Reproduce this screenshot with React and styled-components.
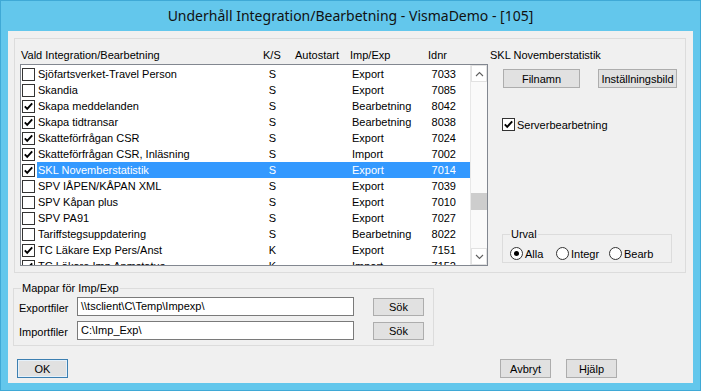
import styled, { createGlobalStyle } from 'styled-components'

const GlobalStyle = createGlobalStyle`
  * { box-sizing: border-box; }
  body {
    margin: 0;
    font-family: 'Liberation Sans', Arial, sans-serif;
    font-size: 11px;
    color: #000;
  }
`

const color = {
  frame: '#63c7ec',
  frameEdge: '#3fa9d6',
  face: '#f0f0f0',
  groupLine: '#dcdcdc',
  button: '#e1e1e1',
  buttonLine: '#adadad',
  select: '#3399ff',
}

const Window = styled.div`
  width: 701px;
  height: 391px;
  background: ${color.frame};
  border: 1px solid ${color.frameEdge};
  display: flex;
  flex-direction: column;
  padding: 0 7px 7px 7px;
`

const TitleBar = styled.div`
  height: 30px;
  display: flex;
  align-items: center;
  justify-content: center;
  font-family: 'Noto Sans', 'Liberation Sans', sans-serif;
  font-size: 14px;
  color: #111;
  padding-bottom: 1px;
`

const Client = styled.div`
  flex: 1;
  background: ${color.face};
  display: flex;
  flex-direction: column;
`

const MainGroup = styled.div`
  margin: 7px 7px 0 6px;
  height: 235px;
  border: 1px solid ${color.groupLine};
  display: flex;
  padding: 7px 0 0 5px;
`

const ListSide = styled.div`
  width: 468px;
  display: flex;
  flex-direction: column;
`

const HeaderRow = styled.div`
  height: 18px;
  line-height: 18px;
  display: grid;
  grid-template-columns: 242px 32px 55px 78px 1fr;
  padding-left: 1px;
`

const ListBox = styled.div`
  width: 468px;
  height: 202px;
  border: 1px solid #828790;
  background: #fff;
  display: flex;
  overflow: hidden;
`

const Rows = styled.div`
  width: 449px;
  padding-top: 1px;
`

const Row = styled.div`
  height: 16px;
  display: flex;
  align-items: center;
`

const CheckCell = styled.div`
  width: 16px;
  display: flex;
  justify-content: flex-start;
  padding-left: 1px;
`

const RowBody = styled.div`
  flex: 1;
  height: 16px;
  line-height: 16px;
  display: grid;
  grid-template-columns: 225px 21px 66px 78px 29px 1fr;
  background: ${({ selected }) => (selected ? color.select : 'transparent')};
  color: ${({ selected }) => (selected ? '#fff' : '#000')};
  white-space: nowrap;
`

const Cell = styled.span`
  padding-left: ${({ pad }) => pad || 0}px;
  text-align: ${({ align }) => align || 'left'};
  overflow: hidden;
`

const ScrollBar = styled.div`
  width: 17px;
  border-left: 1px solid #e8e8e8;
  background: #fafafa;
  display: flex;
  flex-direction: column;
`

const ArrowBox = styled.div`
  height: 17px;
  border: 1px solid #e2e2e2;
  background: #fff;
  display: flex;
  align-items: center;
  justify-content: center;
`

const Track = styled.div`
  flex: 1;
`

const Thumb = styled.div`
  height: 17px;
  background: #cdcdcd;
`

const DetailSide = styled.div`
  flex: 1;
  display: flex;
  flex-direction: column;
  padding-left: 2px;
`

const DetailTitle = styled.div`
  height: 18px;
  line-height: 18px;
`

const ButtonRow = styled.div`
  display: flex;
  gap: 18px;
  margin: 5px 0 0 13px;
`

const Button = styled.button`
  width: ${({ w }) => w || 51}px;
  height: ${({ h }) => h || 19}px;
  padding: 0;
  background: ${color.button};
  border: 1px solid ${({ focused }) => (focused ? '#3c7fb1' : color.buttonLine)};
  box-shadow: ${({ focused }) => (focused ? 'inset 0 0 0 1px #e5f1fb' : 'none')};
  font-family: inherit;
  font-size: 11px;
  color: #000;
`

const CheckLine = styled.label`
  display: flex;
  align-items: center;
  gap: 2px;
  margin: 30px 0 0 12px;
  height: 13px;
`

const GroupBox = styled.div`
  position: relative;
  border: 1px solid ${color.groupLine};
`

const Legend = styled.span`
  position: absolute;
  top: -7px;
  left: ${({ left }) => left || 7}px;
  padding: 0 1px;
  background: ${color.face};
  line-height: 13px;
`

const UrvalBox = styled(GroupBox)`
  margin: auto 0 9px 12px;
  width: 170px;
  height: 29px;
  display: flex;
  align-items: center;
  padding: 10px 0 0 7px;
`

const RadioItem = styled.label`
  width: ${({ w }) => w}px;
  display: flex;
  align-items: center;
  gap: 2px;
`

const RadioCircle = styled.span`
  width: 13px;
  height: 13px;
  border-radius: 50%;
  border: 1px solid #333;
  background: #fff;
  display: flex;
  align-items: center;
  justify-content: center;
  &::after {
    content: '';
    width: 5px;
    height: 5px;
    border-radius: 50%;
    background: ${({ on }) => (on ? '#000' : 'transparent')};
  }
`

const BoxIcon = styled.span`
  width: 13px;
  height: 13px;
  border: 1px solid #333;
  background: #fff;
  display: flex;
  align-items: center;
  justify-content: center;
`

const FolderGroup = styled(GroupBox)`
  margin: 15px 0 0 5px;
  width: 421px;
  height: 58px;
  padding: 8px 0 0 5px;
  display: flex;
  flex-direction: column;
  gap: 5px;
`

const FolderRow = styled.div`
  display: flex;
  align-items: center;
  height: 19px;
`

const FolderLabel = styled.span`
  width: 58px;
  padding-top: 3px;
`

const PathInput = styled.div`
  width: 277px;
  height: 19px;
  border: 1px solid #7a7a7a;
  background: #fff;
  padding: 0 3px;
  line-height: 17px;
  margin-right: 19px;
`

const Footer = styled.div`
  display: flex;
  margin: 13px 0 0 9px;
`

const FooterRight = styled.div`
  display: flex;
  gap: 15px;
  margin-left: auto;
  margin-right: 76px;
`

function CheckBox({ checked }) {
  return (
    <BoxIcon>
      {checked && (
        <svg width="11" height="11" viewBox="0 0 11 11">
          <path d="M1.8 5.4 L4.2 7.9 L9.2 2.3" fill="none" stroke="#000" strokeWidth="1.9" />
        </svg>
      )}
    </BoxIcon>
  )
}

function Chevron({ down }) {
  return (
    <svg width="9" height="6" viewBox="0 0 9 6">
      <path
        d={down ? 'M1 1 L4.5 4.5 L8 1' : 'M1 5 L4.5 1.5 L8 5'}
        fill="none"
        stroke="#606060"
        strokeWidth="1.1"
      />
    </svg>
  )
}

const items = [
  { name: 'Sjöfartsverket-Travel Person', ks: 'S', type: 'Export', id: '7033', on: false },
  { name: 'Skandia', ks: 'S', type: 'Export', id: '7085', on: false },
  { name: 'Skapa meddelanden', ks: 'S', type: 'Bearbetning', id: '8042', on: true },
  { name: 'Skapa tidtransar', ks: 'S', type: 'Bearbetning', id: '8038', on: true },
  { name: 'Skatteförfrågan CSR', ks: 'S', type: 'Export', id: '7024', on: true },
  { name: 'Skatteförfrågan CSR, Inläsning', ks: 'S', type: 'Import', id: '7002', on: true },
  { name: 'SKL Novemberstatistik', ks: 'S', type: 'Export', id: '7014', on: true, selected: true },
  { name: 'SPV IÅPEN/KÅPAN XML', ks: 'S', type: 'Export', id: '7039', on: false },
  { name: 'SPV Kåpan plus', ks: 'S', type: 'Export', id: '7010', on: false },
  { name: 'SPV PA91', ks: 'S', type: 'Export', id: '7027', on: false },
  { name: 'Tariffstegsuppdatering', ks: 'S', type: 'Bearbetning', id: '8022', on: false },
  { name: 'TC Läkare Exp Pers/Anst', ks: 'K', type: 'Export', id: '7151', on: true },
  { name: 'TC Läkare Imp Anmstatus', ks: 'K', type: 'Import', id: '7152', on: true },
]

export default function App() {
  return (
    <>
      <GlobalStyle />
      <Window>
        <TitleBar>Underhåll Integration/Bearbetning - VismaDemo - [105]</TitleBar>
        <Client>
          <MainGroup>
            <ListSide>
              <HeaderRow>
                <span>Vald Integration/Bearbetning</span>
                <span>K/S</span>
                <span>Autostart</span>
                <span>Imp/Exp</span>
                <span>Idnr</span>
              </HeaderRow>
              <ListBox>
                <Rows>
                  {items.map((it) => (
                    <Row key={it.id}>
                      <CheckCell>
                        <CheckBox checked={it.on} />
                      </CheckCell>
                      <RowBody selected={it.selected}>
                        <Cell pad={1}>{it.name}</Cell>
                        <Cell align="center">{it.ks}</Cell>
                        <Cell />
                        <Cell pad={3}>{it.type}</Cell>
                        <Cell align="right">{it.id}</Cell>
                        <Cell />
                      </RowBody>
                    </Row>
                  ))}
                </Rows>
                <ScrollBar>
                  <ArrowBox>
                    <Chevron />
                  </ArrowBox>
                  <Track>
                    <Thumb style={{ marginTop: 111 }} />
                  </Track>
                  <ArrowBox>
                    <Chevron down />
                  </ArrowBox>
                </ScrollBar>
              </ListBox>
            </ListSide>
            <DetailSide>
              <DetailTitle>SKL Novemberstatistik</DetailTitle>
              <ButtonRow>
                <Button w={77}>Filnamn</Button>
                <Button w={79}>Inställningsbild</Button>
              </ButtonRow>
              <CheckLine>
                <CheckBox checked />
                Serverbearbetning
              </CheckLine>
              <UrvalBox>
                <Legend>Urval</Legend>
                <RadioItem w={46}>
                  <RadioCircle on />
                  Alla
                </RadioItem>
                <RadioItem w={53}>
                  <RadioCircle />
                  Integr
                </RadioItem>
                <RadioItem w={60}>
                  <RadioCircle />
                  Bearb
                </RadioItem>
              </UrvalBox>
            </DetailSide>
          </MainGroup>
          <FolderGroup>
            <Legend>Mappar för Imp/Exp</Legend>
            <FolderRow>
              <FolderLabel>Exportfiler</FolderLabel>
              <PathInput>\\tsclient\C\Temp\Impexp\</PathInput>
              <Button h={18}>Sök</Button>
            </FolderRow>
            <FolderRow>
              <FolderLabel>Importfiler</FolderLabel>
              <PathInput>C:\Imp_Exp\</PathInput>
              <Button h={18}>Sök</Button>
            </FolderRow>
          </FolderGroup>
          <Footer>
            <Button focused>OK</Button>
            <FooterRight>
              <Button>Avbryt</Button>
              <Button>Hjälp</Button>
            </FooterRight>
          </Footer>
        </Client>
      </Window>
    </>
  )
}
